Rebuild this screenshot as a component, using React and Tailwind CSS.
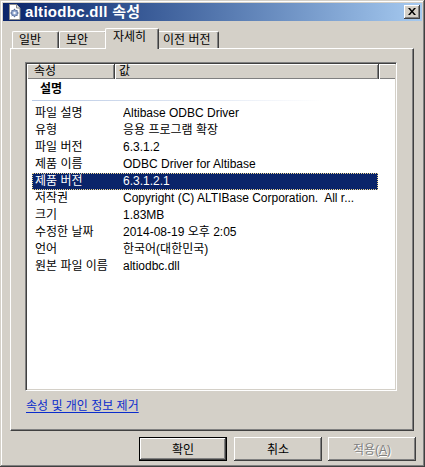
import React from "react";

const rows = [
  ["파일 설명", "Altibase ODBC Driver"],
  ["유형", "응용 프로그램 확장"],
  ["파일 버전", "6.3.1.2"],
  ["제품 이름", "ODBC Driver for Altibase"],
  ["제품 버전", "6.3.1.2.1", true],
  ["저작권", "Copyright (C) ALTIBase Corporation.  All r..."],
  ["크기", "1.83MB"],
  ["수정한 날짜", "2014-08-19 오후 2:05"],
  ["언어", "한국어(대한민국)"],
  ["원본 파일 이름", "altiodbc.dll"],
];

function TitleIcon() {
  return (
    <svg width="16" height="16" viewBox="0 0 16 16" className="shrink-0">
      <path d="M2.5 0.5h7l3.5 3.5v11.5h-10.5z" fill="#ffffff" stroke="#8a8a8a" />
      <path d="M9.5 0.5v3.5h3.5" fill="#e8e8e8" stroke="#8a8a8a" />
      <circle cx="7.5" cy="9" r="3.2" fill="#8fa6cf" stroke="#5a6f9a" strokeWidth="0.8" />
      <circle cx="7.5" cy="9" r="1.2" fill="#ffffff" />
      <path d="M7.5 4.8v1.2M7.5 12v1.2M3.3 9h1.2M10.5 9h1.2M4.6 6.1l0.9 0.9M9.5 11l0.9 0.9M4.6 11.9l0.9-0.9M9.5 7l0.9-0.9" stroke="#5a6f9a" strokeWidth="1" />
    </svg>
  );
}

function Btn({ children, kind }) {
  if (kind === "default") {
    return (
      <div className="w-[88px] h-[24px] border border-black flex">
        <div className="flex-1 flex items-center justify-center shadow-[inset_-1px_-1px_#404040,inset_1px_1px_#ffffff,inset_-2px_-2px_#808080] text-[12px] text-black pt-[1px]">
          {children}
        </div>
      </div>
    );
  }
  if (kind === "disabled") {
    return (
      <div className="w-[88px] h-[24px] flex items-center justify-center shadow-[inset_-1px_-1px_#404040,inset_1px_1px_#ffffff,inset_-2px_-2px_#808080,inset_2px_2px_#d4d0c8] text-[12px] text-[#808080] [text-shadow:1px_1px_0_#ffffff] pt-[1px]">
        {children}
      </div>
    );
  }
  return (
    <div className="w-[88px] h-[24px] flex items-center justify-center shadow-[inset_-1px_-1px_#404040,inset_1px_1px_#ffffff,inset_-2px_-2px_#808080,inset_2px_2px_#d4d0c8] text-[12px] text-black pt-[1px]">
      {children}
    </div>
  );
}

export default function App() {
  return (
    <div className="w-[425px] h-[467px] bg-[#d4d0c8] p-[3px] flex flex-col shadow-[inset_-1px_-1px_#404040,inset_1px_1px_#d4d0c8,inset_-2px_-2px_#808080,inset_2px_2px_#ffffff] font-['Liberation_Sans','Noto_Sans_CJK_KR',sans-serif] text-[12px] text-black overflow-hidden">
      {/* Title bar */}
      <div className="h-[18px] flex items-center bg-gradient-to-r from-[#0a246a] to-[#a6caf0]">
        <div className="ml-[4px]">
          <TitleIcon />
        </div>
        <div className="ml-[2px] text-white font-bold text-[15px] tracking-[0.3px] leading-[18px] whitespace-nowrap">
          altiodbc.dll 속성
        </div>
        <div className="ml-auto mr-[2px] w-[16px] h-[14px] bg-[#d4d0c8] flex items-center justify-center shadow-[inset_-1px_-1px_#404040,inset_1px_1px_#ffffff,inset_-2px_-2px_#808080]">
          <svg width="8" height="7" viewBox="0 0 8 7" className="mb-[1px]">
            <path d="M0 0h2l2 2.5 2-2.5h2l-3 3.5 3 3.5h-2l-2-2.5-2 2.5h-2l3-3.5z" fill="#000000" />
          </svg>
        </div>
      </div>

      {/* Tabs */}
      <div className="mt-[7px] h-[20px] pl-[9px] flex items-end">
        <div className="w-[47px] h-[17px] border-l border-t border-white border-r border-r-[#404040] rounded-tl-[2px] rounded-tr-[2px] shadow-[inset_-1px_0_#808080] pl-[6px] leading-[16px] text-[12px]">
          일반
        </div>
        <div className="w-[48px] h-[17px] border-l border-t border-white border-r border-r-[#404040] rounded-tl-[2px] rounded-tr-[2px] shadow-[inset_-1px_0_#808080] pl-[6px] leading-[16px] text-[12px]">
          보안
        </div>
        <div className="relative z-10 -ml-[2px] -mr-[2px] -mb-[1px] w-[54px] h-[21px] bg-[#d4d0c8] border-l border-t border-white border-r border-r-[#404040] rounded-tl-[2px] rounded-tr-[2px] shadow-[inset_-1px_0_#808080] pl-[7px] leading-[17px] text-[12px]">
          자세히
        </div>
        <div className="w-[62px] h-[17px] border-l border-t border-white border-r border-r-[#404040] rounded-tl-[2px] rounded-tr-[2px] shadow-[inset_-1px_0_#808080] pl-[5px] leading-[16px] text-[12px] whitespace-nowrap">
          이전 버전
        </div>
      </div>

      {/* Panel */}
      <div className="ml-[7px] w-[404px] h-[383px] border-t border-l border-white border-r border-b border-r-[#404040] border-b-[#404040] shadow-[inset_-1px_-1px_#808080] pl-[14px] pt-[13px] flex flex-col">
        {/* List */}
        <div className="w-[372px] h-[329px] bg-white border border-t-[#808080] border-l-[#808080] border-r-white border-b-white shadow-[inset_1px_1px_#404040,inset_-1px_-1px_#d4d0c8] p-[1px] flex flex-col">
          {/* header */}
          <div className="h-[15px] flex shrink-0 bg-[#d4d0c8]">
            <div className="w-[88px] h-full pl-[7px] leading-[14px] shadow-[inset_1px_1px_#ffffff,inset_-1px_-1px_#808080] border-r border-[#404040]">
              속성
            </div>
            <div className="w-[264px] h-full pl-[4px] leading-[14px] shadow-[inset_1px_1px_#ffffff,inset_-1px_-1px_#808080] border-r border-[#404040]">
              값
            </div>
            <div className="flex-1 h-full shadow-[inset_1px_1px_#ffffff,inset_0_-1px_#808080]" />
          </div>
          {/* group */}
          <div className="h-[18px] mt-[1px] pl-[13px] font-bold leading-[18px] text-[12px]">설명</div>
          <div className="mt-[2px] ml-[5px] w-[292px] h-[1px] bg-gradient-to-r from-[#b9c9e4] to-white" />
          <div className="mt-[4px] flex flex-col">
            {rows.map(([k, v, sel]) => (
              <div
                key={k}
                className={
                  sel
                    ? "ml-[5px] w-[346px] h-[17px] flex bg-[#0a246a] text-white outline outline-1 outline-dotted outline-[#f0d890] -outline-offset-1"
                    : "ml-[5px] w-[346px] h-[17px] flex"
                }
              >
                <div className="w-[91px] pl-[3px] leading-[17px] whitespace-nowrap">{k}</div>
                <div className="flex-1 leading-[17px] whitespace-pre overflow-hidden">{v}</div>
              </div>
            ))}
          </div>
        </div>
        {/* link */}
        <div className="mt-[7px] ml-[1px] leading-[16px]">
          <span className="text-[#0a2ccc] underline underline-offset-2">속성 및 개인 정보 제거</span>
        </div>
      </div>

      {/* Buttons */}
      <div className="mt-[6px] pr-[6px] flex justify-end">
        <div className="mr-[7px]">
          <Btn kind="default">확인</Btn>
        </div>
        <div className="mr-[6px]">
          <Btn>취소</Btn>
        </div>
        <Btn kind="disabled">
          <span>
            적용(<span className="underline">A</span>)
          </span>
        </Btn>
      </div>
    </div>
  );
}
